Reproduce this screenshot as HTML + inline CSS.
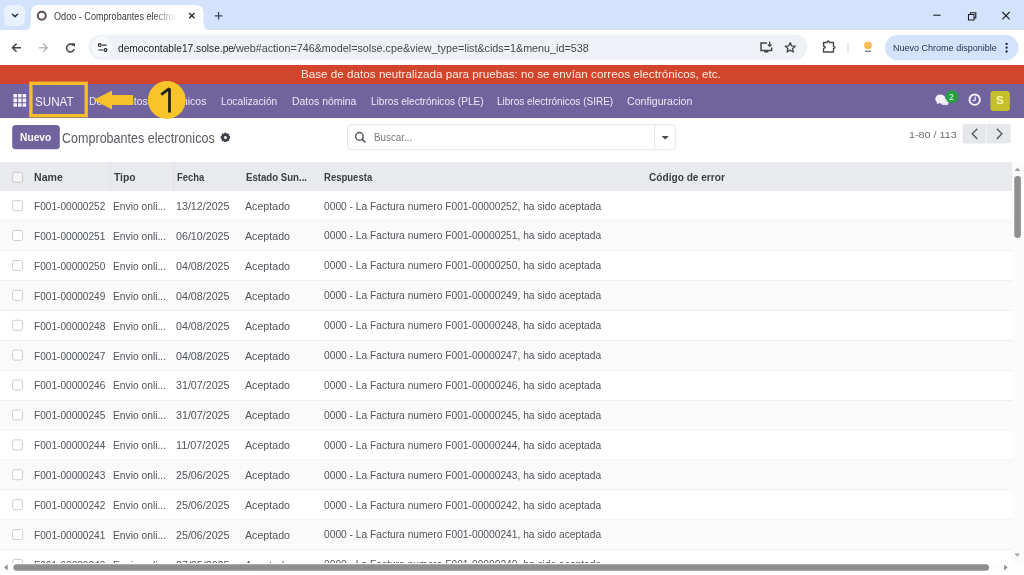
<!DOCTYPE html>
<html><head><meta charset="utf-8"><style>
html,body{margin:0;padding:0;}
body{width:1024px;height:575px;overflow:hidden;position:relative;background:#fff;font-family:'Liberation Sans', sans-serif;}
.a{position:absolute;}
.t{position:absolute;white-space:pre;transform-origin:0 0;font-family:'Liberation Sans', sans-serif;}
svg{position:absolute;overflow:visible;}
</style></head><body>
<div class="a" style="left:0;top:0;width:1024px;height:30.2px;background:#d3e3fd"></div>
<svg style="left:0;top:0" width="1024" height="66">
<rect x="4" y="5" width="21" height="21" rx="6" fill="#e9f1fd"/>
<path d="M12.4 14.2 L15 16.6 L17.6 14.2" stroke="#2e3744" stroke-width="1.5" fill="none" stroke-linecap="round" stroke-linejoin="round"/>
<path d="M23 30.4 Q31 30.4 31 22.4 L31 13 Q31 5 39 5 L195.5 5 Q203.5 5 203.5 13 L203.5 22.4 Q203.5 30.4 211.5 30.4 Z" fill="#ffffff"/>
<circle cx="41.8" cy="15.7" r="4.0" stroke="#5b4954" stroke-width="1.9" fill="none"/>
<path d="M189.1 12.9 L194.5 18.3 M194.5 12.9 L189.1 18.3" stroke="#2b2b2b" stroke-width="1.35"/>
<path d="M214.8 15.8 H222.4 M218.6 12 V19.6" stroke="#3d4a5c" stroke-width="1.3"/>
<path d="M933.3 15.2 H940.6" stroke="#1f1f1f" stroke-width="1.1"/>
<path d="M968.5 14.5 h5.5 v5.5 h-5.5 z M970.5 14.5 v-1.8 h5.3 v5.3 h-1.8" stroke="#1f1f1f" stroke-width="1.1" fill="none"/>
<path d="M1002.3 12 L1009.7 19.4 M1009.7 12 L1002.3 19.4" stroke="#1f1f1f" stroke-width="1.1"/>
<!-- toolbar icons -->
<path d="M21 47.7 H12.6 M16.6 43.6 L12.5 47.7 L16.6 51.8" stroke="#474747" stroke-width="1.6" fill="none"/>
<path d="M38.9 47.7 H47.2 M43.2 43.6 L47.3 47.7 L43.2 51.8" stroke="#b9b9b9" stroke-width="1.5" fill="none"/>
<path d="M73.4 45.5 A3.9 3.9 0 1 0 74.2 49" stroke="#474747" stroke-width="1.55" fill="none"/>
<path d="M71.2 43.3 L75 43.3 L75 47.1 Z" fill="#474747"/>
<rect x="88.5" y="34.5" width="718.9" height="25.2" rx="12.6" fill="#eef1f6"/>
<circle cx="102" cy="47" r="10.2" fill="#f7f8fb"/>
<circle cx="99.7" cy="45.1" r="1.4" stroke="#2a2a2a" stroke-width="1.15" fill="none"/>
<path d="M102.1 45.1 H106.5 M98.4 50 H103.2" stroke="#2a2a2a" stroke-width="1.15"/>
<circle cx="105.5" cy="50" r="1.4" stroke="#2a2a2a" stroke-width="1.15" fill="none"/>
<path d="M767 42.9 H761 V50.4 H771.6 V47.5" stroke="#474747" stroke-width="1.5" fill="none"/>
<path d="M764.2 51.8 H768.4" stroke="#333" stroke-width="1.4"/>
<path d="M769.7 41.6 V46 M767.8 44.4 L769.7 46.3 L771.6 44.4" stroke="#474747" stroke-width="1.3" fill="none"/>
<path d="M790.2 42.6 L791.7 45.9 L795.2 46.2 L792.5 48.5 L793.3 52 L790.2 50.1 L787.1 52 L787.9 48.5 L785.2 46.2 L788.7 45.9 Z" stroke="#474747" stroke-width="1.3" fill="none" stroke-linejoin="round"/>
<path d="M823.5 42.5 H827 Q827.5 41 828.3 41 Q829.1 41 829.6 42.5 H833.5 V46.3 Q835 46.8 835 47.4 Q835 48 833.5 48.5 V52 H823.5 V48.6 Q825.2 48 825.2 47.3 Q825.2 46.6 823.5 46 Z" stroke="#474747" stroke-width="1.4" fill="none" stroke-linejoin="round"/>
<path d="M848 42.3 V52.6" stroke="#d4d4d4" stroke-width="1"/>
<circle cx="867.9" cy="45.3" r="3.9" fill="#f7bc55"/>
<rect x="864.9" y="50.7" width="6" height="1.2" fill="#6a6a6a"/>
<rect x="884.9" y="35" width="133.6" height="25.3" rx="12.6" fill="#d3e3fd"/>
<circle cx="1006.6" cy="43.9" r="1.15" fill="#1f1f1f"/>
<circle cx="1006.6" cy="47.7" r="1.15" fill="#1f1f1f"/>
<circle cx="1006.6" cy="51.5" r="1.15" fill="#1f1f1f"/>
</svg>
<div class="a" style="left:0;top:65px;width:1024px;height:18.5px;background:#d0452b"></div>
<div class="a" style="left:0;top:83.5px;width:1024px;height:34px;background:#71639e"></div>
<svg style="left:0;top:0" width="1024" height="160"><rect x="13.40" y="94.00" width="3.6" height="3.6" rx="0.6" fill="#f4f1fa"/><rect x="18.00" y="94.00" width="3.6" height="3.6" rx="0.6" fill="#f4f1fa"/><rect x="22.60" y="94.00" width="3.6" height="3.6" rx="0.6" fill="#f4f1fa"/><rect x="13.40" y="98.60" width="3.6" height="3.6" rx="0.6" fill="#f4f1fa"/><rect x="18.00" y="98.60" width="3.6" height="3.6" rx="0.6" fill="#f4f1fa"/><rect x="22.60" y="98.60" width="3.6" height="3.6" rx="0.6" fill="#f4f1fa"/><rect x="13.40" y="103.20" width="3.6" height="3.6" rx="0.6" fill="#f4f1fa"/><rect x="18.00" y="103.20" width="3.6" height="3.6" rx="0.6" fill="#f4f1fa"/><rect x="22.60" y="103.20" width="3.6" height="3.6" rx="0.6" fill="#f4f1fa"/>
<ellipse cx="944.6" cy="102" rx="4.2" ry="3.1" fill="#ebe6f6"/>
<path d="M946 104 L948.2 105.8 L947.2 102.5 Z" fill="#ebe6f6"/>
<ellipse cx="940.4" cy="98.9" rx="5.1" ry="4.4" fill="#f4f1fb"/>
<path d="M937.5 101.5 L936.6 104.3 L940.2 102.8 Z" fill="#f4f1fb"/>
<circle cx="951.8" cy="96.7" r="6.3" fill="#21a03e"/>
<circle cx="974.7" cy="99.7" r="5.2" stroke="#f5f2fb" stroke-width="1.9" fill="none"/>
<path d="M975.2 96.6 V100.2 L972.6 100.7" stroke="#e6e1f3" stroke-width="1.3" fill="none"/>
<rect x="990.4" y="90.9" width="19.5" height="20" rx="3" fill="#c5bf2b"/>
<!-- control panel -->
<rect x="12.2" y="124.9" width="47.6" height="24.3" rx="3.5" fill="#71639e"/>
<g transform="translate(225.4 137.4)" fill="#3e434a">
<circle r="3.4"/>
<rect x="-1.3" y="-4.7" width="2.6" height="9.4" rx="0.5"/>
<rect x="-1.3" y="-4.7" width="2.6" height="9.4" rx="0.5" transform="rotate(45)"/>
<rect x="-1.3" y="-4.7" width="2.6" height="9.4" rx="0.5" transform="rotate(90)"/>
<rect x="-1.3" y="-4.7" width="2.6" height="9.4" rx="0.5" transform="rotate(135)"/>
<circle r="1.5" fill="#fff"/>
</g>
<rect x="347.6" y="124.7" width="328.1" height="25" rx="4" stroke="#e6e6e8" stroke-width="1" fill="#fff"/>
<path d="M654.7 125 V149.6" stroke="#e6e6e8" stroke-width="1"/>
<path d="M661.6 135.9 H668.8 L665.2 139.4 Z" fill="#444a50"/>
<circle cx="359.4" cy="136.4" r="3.8" stroke="#545a61" stroke-width="1.45" fill="none"/>
<path d="M362.3 139.3 L364.8 141.8" stroke="#545a61" stroke-width="1.7" stroke-linecap="round"/>
<rect x="962.5" y="124.1" width="48.2" height="19.3" rx="2.5" fill="#e5e7ea"/>
<path d="M986.3 124 V143.4" stroke="#f4f5f6" stroke-width="1"/>
<path d="M977.3 128.7 L972.2 133.8 L977.3 138.9" stroke="#50555c" stroke-width="1.35" fill="none"/>
<path d="M996.8 128.7 L1001.9 133.8 L996.8 138.9" stroke="#50555c" stroke-width="1.35" fill="none"/>
</svg>
<svg style="left:0;top:0" width="1024" height="575"><rect x="0" y="162" width="1012" height="29.2" fill="#e9eaed"/><path d="M110.5 162 V191 M173.8 162 V191" stroke="#e1e2e5" stroke-width="1"/><rect x="0" y="191.20" width="1012" height="29.90" fill="#ffffff"/><rect x="0" y="220.60" width="1012" height="1" fill="#e5e5e7"/><rect x="12.6" y="200.65" width="10" height="10" rx="2" stroke="#cdcdd0" stroke-width="1" fill="#fff"/><rect x="0" y="221.10" width="1012" height="29.90" fill="#fafafa"/><rect x="0" y="250.50" width="1012" height="1" fill="#e5e5e7"/><rect x="12.6" y="230.55" width="10" height="10" rx="2" stroke="#cdcdd0" stroke-width="1" fill="#fff"/><rect x="0" y="251.00" width="1012" height="29.90" fill="#ffffff"/><rect x="0" y="280.40" width="1012" height="1" fill="#e5e5e7"/><rect x="12.6" y="260.45" width="10" height="10" rx="2" stroke="#cdcdd0" stroke-width="1" fill="#fff"/><rect x="0" y="280.90" width="1012" height="29.90" fill="#fafafa"/><rect x="0" y="310.30" width="1012" height="1" fill="#e5e5e7"/><rect x="12.6" y="290.35" width="10" height="10" rx="2" stroke="#cdcdd0" stroke-width="1" fill="#fff"/><rect x="0" y="310.80" width="1012" height="29.90" fill="#ffffff"/><rect x="0" y="340.20" width="1012" height="1" fill="#e5e5e7"/><rect x="12.6" y="320.25" width="10" height="10" rx="2" stroke="#cdcdd0" stroke-width="1" fill="#fff"/><rect x="0" y="340.70" width="1012" height="29.90" fill="#fafafa"/><rect x="0" y="370.10" width="1012" height="1" fill="#e5e5e7"/><rect x="12.6" y="350.15" width="10" height="10" rx="2" stroke="#cdcdd0" stroke-width="1" fill="#fff"/><rect x="0" y="370.60" width="1012" height="29.90" fill="#ffffff"/><rect x="0" y="400.00" width="1012" height="1" fill="#e5e5e7"/><rect x="12.6" y="380.05" width="10" height="10" rx="2" stroke="#cdcdd0" stroke-width="1" fill="#fff"/><rect x="0" y="400.50" width="1012" height="29.90" fill="#fafafa"/><rect x="0" y="429.90" width="1012" height="1" fill="#e5e5e7"/><rect x="12.6" y="409.95" width="10" height="10" rx="2" stroke="#cdcdd0" stroke-width="1" fill="#fff"/><rect x="0" y="430.40" width="1012" height="29.90" fill="#ffffff"/><rect x="0" y="459.80" width="1012" height="1" fill="#e5e5e7"/><rect x="12.6" y="439.85" width="10" height="10" rx="2" stroke="#cdcdd0" stroke-width="1" fill="#fff"/><rect x="0" y="460.30" width="1012" height="29.90" fill="#fafafa"/><rect x="0" y="489.70" width="1012" height="1" fill="#e5e5e7"/><rect x="12.6" y="469.75" width="10" height="10" rx="2" stroke="#cdcdd0" stroke-width="1" fill="#fff"/><rect x="0" y="490.20" width="1012" height="29.90" fill="#ffffff"/><rect x="0" y="519.60" width="1012" height="1" fill="#e5e5e7"/><rect x="12.6" y="499.65" width="10" height="10" rx="2" stroke="#cdcdd0" stroke-width="1" fill="#fff"/><rect x="0" y="520.10" width="1012" height="29.90" fill="#fafafa"/><rect x="0" y="549.50" width="1012" height="1" fill="#e5e5e7"/><rect x="12.6" y="529.55" width="10" height="10" rx="2" stroke="#cdcdd0" stroke-width="1" fill="#fff"/><rect x="0" y="550.00" width="1012" height="29.90" fill="#ffffff"/><rect x="0" y="579.40" width="1012" height="1" fill="#e5e5e7"/><rect x="12.6" y="559.45" width="10" height="10" rx="2" stroke="#cdcdd0" stroke-width="1" fill="#fff"/><rect x="12.6" y="172.3" width="10" height="10" rx="2" stroke="#c6c7ca" stroke-width="1" fill="#f4f4f5"/></svg>
<div class="t" style="left:54.26px;top:12.14px;font-size:10px;line-height:10px;color:#3c3c3c;transform:scaleX(0.9092);width:135.4px;overflow:hidden;-webkit-mask-image:linear-gradient(90deg,#000 80%,transparent);mask-image:linear-gradient(90deg,#000 80%,transparent);">Odoo - Comprobantes electronicos</div>
<div class="t" style="left:117.89px;top:43.67px;font-size:10.2px;line-height:10.2px;color:#1f1f1f;transform:scaleX(0.9987);">democontable17.solse.pe</div>
<div class="t" style="left:233.15px;top:43.67px;font-size:10.2px;line-height:10.2px;color:#474747;transform:scaleX(1.0564);">/web#action=746&amp;model=solse.cpe&amp;view_type=list&amp;cids=1&amp;menu_id=538</div>
<div class="t" style="left:893.47px;top:42.64px;font-size:9.4px;line-height:9.4px;color:#28344a;transform:scaleX(0.9618);">Nuevo Chrome disponible</div>
<div class="t" style="left:301.28px;top:69.47px;font-size:11.5px;line-height:11.5px;color:#fdebe4;transform:scaleX(1.0151);">Base de datos neutralizada para pruebas: no se envían correos electrónicos, etc.</div>
<div class="t" style="left:35.09px;top:96.33px;font-size:12.6px;line-height:12.6px;color:#f4f0fb;transform:scaleX(0.9240);">SUNAT</div>
<div class="t" style="left:88.87px;top:95.30px;font-size:11.7px;line-height:11.7px;color:#ece8f6;transform:scaleX(0.8944);">Documentos electrónicos</div>
<div class="t" style="left:220.88px;top:95.30px;font-size:11.7px;line-height:11.7px;color:#ece8f6;transform:scaleX(0.8746);">Localización</div>
<div class="t" style="left:292.17px;top:95.30px;font-size:11.7px;line-height:11.7px;color:#ece8f6;transform:scaleX(0.8926);">Datos nómina</div>
<div class="t" style="left:370.69px;top:95.30px;font-size:11.7px;line-height:11.7px;color:#ece8f6;transform:scaleX(0.8627);">Libros electrónicos (PLE)</div>
<div class="t" style="left:497.20px;top:95.30px;font-size:11.7px;line-height:11.7px;color:#ece8f6;transform:scaleX(0.8555);">Libros electrónicos (SIRE)</div>
<div class="t" style="left:627.06px;top:95.30px;font-size:11.7px;line-height:11.7px;color:#ece8f6;transform:scaleX(0.9066);">Configuracion</div>
<div class="t" style="left:20.18px;top:132.03px;font-size:10.6px;line-height:10.6px;color:#ffffff;font-weight:700;transform:scaleX(0.9651);">Nuevo</div>
<div class="t" style="left:62.22px;top:130.75px;font-size:14.0px;line-height:14.0px;color:#575b61;transform:scaleX(0.8957);">Comprobantes electronicos</div>
<div class="t" style="left:374.21px;top:131.82px;font-size:11.2px;line-height:11.2px;color:#777c82;transform:scaleX(0.8758);">Buscar...</div>
<div class="t" style="left:908.64px;top:130.10px;font-size:9.8px;line-height:9.8px;color:#6a6e73;transform:scaleX(1.1014);">1-80 / 113</div>
<div class="t" style="left:34.16px;top:171.86px;font-size:10.8px;line-height:10.8px;color:#3b3f45;font-weight:700;transform:scaleX(0.9784);">Name</div>
<div class="t" style="left:113.78px;top:171.86px;font-size:10.8px;line-height:10.8px;color:#3b3f45;font-weight:700;transform:scaleX(0.9545);">Tipo</div>
<div class="t" style="left:176.64px;top:171.86px;font-size:10.8px;line-height:10.8px;color:#3b3f45;font-weight:700;transform:scaleX(0.8743);">Fecha</div>
<div class="t" style="left:245.83px;top:171.86px;font-size:10.8px;line-height:10.8px;color:#3b3f45;font-weight:700;transform:scaleX(0.8921);">Estado Sun...</div>
<div class="t" style="left:324.23px;top:171.86px;font-size:10.8px;line-height:10.8px;color:#3b3f45;font-weight:700;transform:scaleX(0.8826);">Respuesta</div>
<div class="t" style="left:649.09px;top:171.86px;font-size:10.8px;line-height:10.8px;color:#3b3f45;font-weight:700;transform:scaleX(0.9366);">Código de error</div>
<div class="t" style="left:34.19px;top:201.03px;font-size:10.6px;line-height:10.6px;color:#50555c;transform:scaleX(0.9537);">F001-00000252</div>
<div class="t" style="left:113.28px;top:201.03px;font-size:10.6px;line-height:10.6px;color:#50555c;transform:scaleX(0.9689);">Envio onli...</div>
<div class="t" style="left:176.25px;top:201.03px;font-size:10.6px;line-height:10.6px;color:#50555c;transform:scaleX(1.0088);">13/12/2025</div>
<div class="t" style="left:244.95px;top:201.03px;font-size:10.6px;line-height:10.6px;color:#50555c;transform:scaleX(1.0051);">Aceptado</div>
<div class="t" style="left:323.68px;top:201.53px;font-size:10.0px;line-height:10.0px;color:#50555c;transform:scaleX(1.0237);">0000 - La Factura numero F001-00000252, ha sido aceptada</div>
<div class="t" style="left:34.19px;top:230.93px;font-size:10.6px;line-height:10.6px;color:#50555c;transform:scaleX(0.9537);">F001-00000251</div>
<div class="t" style="left:113.28px;top:230.93px;font-size:10.6px;line-height:10.6px;color:#50555c;transform:scaleX(0.9689);">Envio onli...</div>
<div class="t" style="left:176.25px;top:230.93px;font-size:10.6px;line-height:10.6px;color:#50555c;transform:scaleX(1.0088);">06/10/2025</div>
<div class="t" style="left:244.95px;top:230.93px;font-size:10.6px;line-height:10.6px;color:#50555c;transform:scaleX(1.0051);">Aceptado</div>
<div class="t" style="left:323.68px;top:231.44px;font-size:10.0px;line-height:10.0px;color:#50555c;transform:scaleX(1.0237);">0000 - La Factura numero F001-00000251, ha sido aceptada</div>
<div class="t" style="left:34.19px;top:260.83px;font-size:10.6px;line-height:10.6px;color:#50555c;transform:scaleX(0.9537);">F001-00000250</div>
<div class="t" style="left:113.28px;top:260.83px;font-size:10.6px;line-height:10.6px;color:#50555c;transform:scaleX(0.9689);">Envio onli...</div>
<div class="t" style="left:176.25px;top:260.83px;font-size:10.6px;line-height:10.6px;color:#50555c;transform:scaleX(1.0088);">04/08/2025</div>
<div class="t" style="left:244.95px;top:260.83px;font-size:10.6px;line-height:10.6px;color:#50555c;transform:scaleX(1.0051);">Aceptado</div>
<div class="t" style="left:323.68px;top:261.34px;font-size:10.0px;line-height:10.0px;color:#50555c;transform:scaleX(1.0237);">0000 - La Factura numero F001-00000250, ha sido aceptada</div>
<div class="t" style="left:34.19px;top:290.73px;font-size:10.6px;line-height:10.6px;color:#50555c;transform:scaleX(0.9537);">F001-00000249</div>
<div class="t" style="left:113.28px;top:290.73px;font-size:10.6px;line-height:10.6px;color:#50555c;transform:scaleX(0.9689);">Envio onli...</div>
<div class="t" style="left:176.25px;top:290.73px;font-size:10.6px;line-height:10.6px;color:#50555c;transform:scaleX(1.0088);">04/08/2025</div>
<div class="t" style="left:244.95px;top:290.73px;font-size:10.6px;line-height:10.6px;color:#50555c;transform:scaleX(1.0051);">Aceptado</div>
<div class="t" style="left:323.68px;top:291.24px;font-size:10.0px;line-height:10.0px;color:#50555c;transform:scaleX(1.0237);">0000 - La Factura numero F001-00000249, ha sido aceptada</div>
<div class="t" style="left:34.19px;top:320.63px;font-size:10.6px;line-height:10.6px;color:#50555c;transform:scaleX(0.9537);">F001-00000248</div>
<div class="t" style="left:113.28px;top:320.63px;font-size:10.6px;line-height:10.6px;color:#50555c;transform:scaleX(0.9689);">Envio onli...</div>
<div class="t" style="left:176.25px;top:320.63px;font-size:10.6px;line-height:10.6px;color:#50555c;transform:scaleX(1.0088);">04/08/2025</div>
<div class="t" style="left:244.95px;top:320.63px;font-size:10.6px;line-height:10.6px;color:#50555c;transform:scaleX(1.0051);">Aceptado</div>
<div class="t" style="left:323.68px;top:321.14px;font-size:10.0px;line-height:10.0px;color:#50555c;transform:scaleX(1.0237);">0000 - La Factura numero F001-00000248, ha sido aceptada</div>
<div class="t" style="left:34.19px;top:350.53px;font-size:10.6px;line-height:10.6px;color:#50555c;transform:scaleX(0.9537);">F001-00000247</div>
<div class="t" style="left:113.28px;top:350.53px;font-size:10.6px;line-height:10.6px;color:#50555c;transform:scaleX(0.9689);">Envio onli...</div>
<div class="t" style="left:176.25px;top:350.53px;font-size:10.6px;line-height:10.6px;color:#50555c;transform:scaleX(1.0088);">04/08/2025</div>
<div class="t" style="left:244.95px;top:350.53px;font-size:10.6px;line-height:10.6px;color:#50555c;transform:scaleX(1.0051);">Aceptado</div>
<div class="t" style="left:323.68px;top:351.04px;font-size:10.0px;line-height:10.0px;color:#50555c;transform:scaleX(1.0237);">0000 - La Factura numero F001-00000247, ha sido aceptada</div>
<div class="t" style="left:34.19px;top:380.43px;font-size:10.6px;line-height:10.6px;color:#50555c;transform:scaleX(0.9537);">F001-00000246</div>
<div class="t" style="left:113.28px;top:380.43px;font-size:10.6px;line-height:10.6px;color:#50555c;transform:scaleX(0.9689);">Envio onli...</div>
<div class="t" style="left:176.25px;top:380.43px;font-size:10.6px;line-height:10.6px;color:#50555c;transform:scaleX(1.0088);">31/07/2025</div>
<div class="t" style="left:244.95px;top:380.43px;font-size:10.6px;line-height:10.6px;color:#50555c;transform:scaleX(1.0051);">Aceptado</div>
<div class="t" style="left:323.68px;top:380.94px;font-size:10.0px;line-height:10.0px;color:#50555c;transform:scaleX(1.0237);">0000 - La Factura numero F001-00000246, ha sido aceptada</div>
<div class="t" style="left:34.19px;top:410.33px;font-size:10.6px;line-height:10.6px;color:#50555c;transform:scaleX(0.9537);">F001-00000245</div>
<div class="t" style="left:113.28px;top:410.33px;font-size:10.6px;line-height:10.6px;color:#50555c;transform:scaleX(0.9689);">Envio onli...</div>
<div class="t" style="left:176.25px;top:410.33px;font-size:10.6px;line-height:10.6px;color:#50555c;transform:scaleX(1.0088);">31/07/2025</div>
<div class="t" style="left:244.95px;top:410.33px;font-size:10.6px;line-height:10.6px;color:#50555c;transform:scaleX(1.0051);">Aceptado</div>
<div class="t" style="left:323.68px;top:410.83px;font-size:10.0px;line-height:10.0px;color:#50555c;transform:scaleX(1.0237);">0000 - La Factura numero F001-00000245, ha sido aceptada</div>
<div class="t" style="left:34.19px;top:440.23px;font-size:10.6px;line-height:10.6px;color:#50555c;transform:scaleX(0.9537);">F001-00000244</div>
<div class="t" style="left:113.28px;top:440.23px;font-size:10.6px;line-height:10.6px;color:#50555c;transform:scaleX(0.9689);">Envio onli...</div>
<div class="t" style="left:176.24px;top:440.23px;font-size:10.6px;line-height:10.6px;color:#50555c;transform:scaleX(1.0245);">11/07/2025</div>
<div class="t" style="left:244.95px;top:440.23px;font-size:10.6px;line-height:10.6px;color:#50555c;transform:scaleX(1.0051);">Aceptado</div>
<div class="t" style="left:323.68px;top:440.74px;font-size:10.0px;line-height:10.0px;color:#50555c;transform:scaleX(1.0237);">0000 - La Factura numero F001-00000244, ha sido aceptada</div>
<div class="t" style="left:34.19px;top:470.13px;font-size:10.6px;line-height:10.6px;color:#50555c;transform:scaleX(0.9537);">F001-00000243</div>
<div class="t" style="left:113.28px;top:470.13px;font-size:10.6px;line-height:10.6px;color:#50555c;transform:scaleX(0.9689);">Envio onli...</div>
<div class="t" style="left:176.25px;top:470.13px;font-size:10.6px;line-height:10.6px;color:#50555c;transform:scaleX(1.0088);">25/06/2025</div>
<div class="t" style="left:244.95px;top:470.13px;font-size:10.6px;line-height:10.6px;color:#50555c;transform:scaleX(1.0051);">Aceptado</div>
<div class="t" style="left:323.68px;top:470.63px;font-size:10.0px;line-height:10.0px;color:#50555c;transform:scaleX(1.0237);">0000 - La Factura numero F001-00000243, ha sido aceptada</div>
<div class="t" style="left:34.19px;top:500.03px;font-size:10.6px;line-height:10.6px;color:#50555c;transform:scaleX(0.9537);">F001-00000242</div>
<div class="t" style="left:113.28px;top:500.03px;font-size:10.6px;line-height:10.6px;color:#50555c;transform:scaleX(0.9689);">Envio onli...</div>
<div class="t" style="left:176.25px;top:500.03px;font-size:10.6px;line-height:10.6px;color:#50555c;transform:scaleX(1.0088);">25/06/2025</div>
<div class="t" style="left:244.95px;top:500.03px;font-size:10.6px;line-height:10.6px;color:#50555c;transform:scaleX(1.0051);">Aceptado</div>
<div class="t" style="left:323.68px;top:500.54px;font-size:10.0px;line-height:10.0px;color:#50555c;transform:scaleX(1.0237);">0000 - La Factura numero F001-00000242, ha sido aceptada</div>
<div class="t" style="left:34.19px;top:529.93px;font-size:10.6px;line-height:10.6px;color:#50555c;transform:scaleX(0.9537);">F001-00000241</div>
<div class="t" style="left:113.28px;top:529.93px;font-size:10.6px;line-height:10.6px;color:#50555c;transform:scaleX(0.9689);">Envio onli...</div>
<div class="t" style="left:176.25px;top:529.93px;font-size:10.6px;line-height:10.6px;color:#50555c;transform:scaleX(1.0088);">25/06/2025</div>
<div class="t" style="left:244.95px;top:529.93px;font-size:10.6px;line-height:10.6px;color:#50555c;transform:scaleX(1.0051);">Aceptado</div>
<div class="t" style="left:323.68px;top:530.43px;font-size:10.0px;line-height:10.0px;color:#50555c;transform:scaleX(1.0237);">0000 - La Factura numero F001-00000241, ha sido aceptada</div>
<div class="t" style="left:34.19px;top:559.83px;font-size:10.6px;line-height:10.6px;color:#50555c;transform:scaleX(0.9537);">F001-00000240</div>
<div class="t" style="left:113.28px;top:559.83px;font-size:10.6px;line-height:10.6px;color:#50555c;transform:scaleX(0.9689);">Envio onli...</div>
<div class="t" style="left:176.25px;top:559.83px;font-size:10.6px;line-height:10.6px;color:#50555c;transform:scaleX(1.0088);">27/05/2025</div>
<div class="t" style="left:244.95px;top:559.83px;font-size:10.6px;line-height:10.6px;color:#50555c;transform:scaleX(1.0051);">Aceptado</div>
<div class="t" style="left:323.68px;top:560.33px;font-size:10.0px;line-height:10.0px;color:#50555c;transform:scaleX(1.0237);">0000 - La Factura numero F001-00000240, ha sido aceptada</div>
<svg style="left:0;top:0" width="1024" height="575">
<rect x="1012" y="162" width="12" height="401" fill="#fbfbfb"/>
<path d="M1014.6 171 L1020.4 171 L1017.5 167.6 Z" fill="#a3a3a3"/>
<rect x="1014.3" y="176.1" width="6.6" height="61.9" rx="3.3" fill="#8f8f8f"/>
<path d="M1014.4 553.4 L1020 553.4 L1017.2 556.8 Z" fill="#a3a3a3"/>
<rect x="0" y="563" width="1024" height="12" fill="#fdfdfd"/>
<path d="M7.6 564.6 L7.6 570.4 L4.2 567.5 Z" fill="#8a8a8a"/>
<rect x="13.3" y="564.2" width="975.7" height="6.5" rx="3.25" fill="#8f8f8f"/>
<path d="M1004.2 564.7 L1004.2 570.5 L1007.6 567.6 Z" fill="#8a8a8a"/>
<rect x="30.9" y="83.3" width="55.3" height="32.4" stroke="#f5bd2a" stroke-width="3.4" fill="none"/>
<path d="M93.5 100.1 L112 90.4 L112 95.1 L133 95.1 L133 104.9 L112 104.9 L112 109.6 Z" fill="#f7c12c"/>
<circle cx="166.8" cy="100" r="18.9" fill="#f8c42a"/>
<path d="M169.5 88.2 V112.6 M169.6 88.4 L161.2 94.6" stroke="#242220" stroke-width="2.8" fill="none"/>
</svg>
<div class="t" style="left:949px;top:92.5px;font-size:8.4px;line-height:8.6px;color:#ffffff">2</div>
<div class="t" style="left:996px;top:94.5px;font-size:11.5px;line-height:11.5px;color:#f6f3b0;font-weight:700">S</div>
</body></html>
